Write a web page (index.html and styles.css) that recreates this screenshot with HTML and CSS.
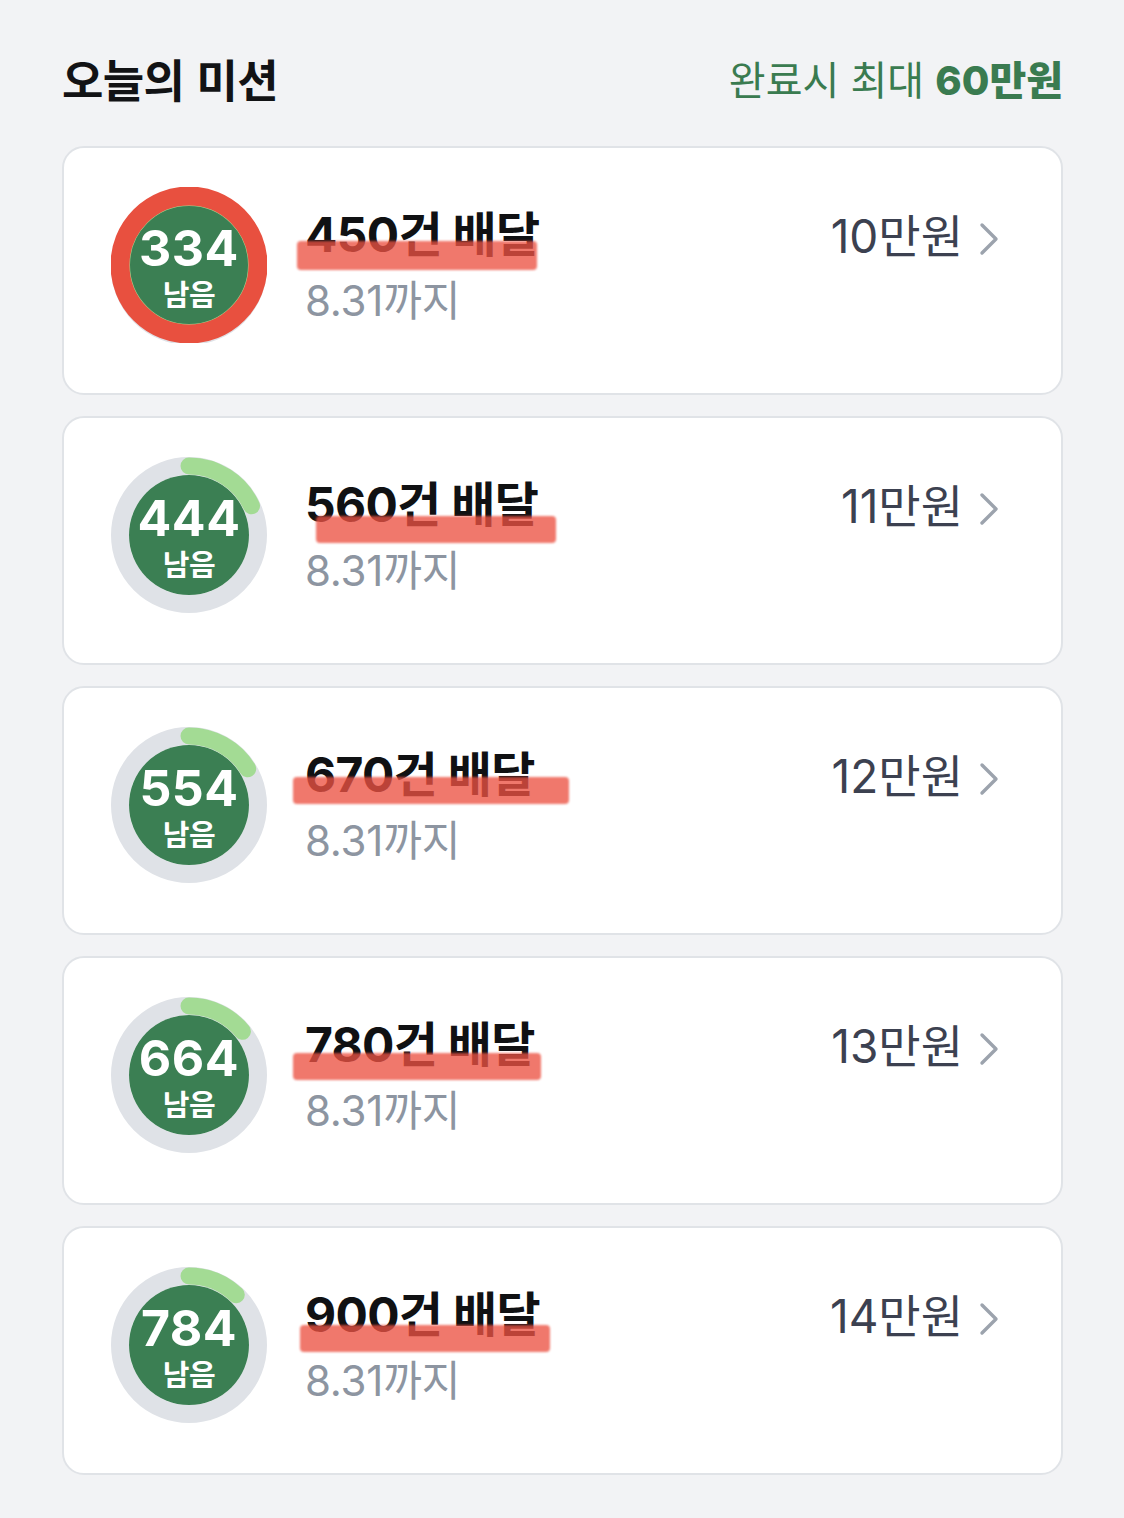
FILE: index.html
```html
<!DOCTYPE html>
<html lang="ko">
<head>
<meta charset="utf-8">
<link rel="stylesheet" href="styles.css">
</head>
<body>
<main class="page">
  <header class="head">
    <h1 class="head-title">오늘의 미션</h1>
    <div class="head-reward">완료시 최대 <b>60만원</b></div>
  </header>

  <section class="list">
    <article class="card">
      <div class="ring">
        <svg class="ring-svg" viewBox="0 0 156 156" width="156" height="156">
          <circle cx="78" cy="80" r="69" fill="none" stroke="#dfe2e7" stroke-width="18"/>
          <circle cx="78" cy="78" r="60" fill="#3b7f53"/>
          <circle cx="78" cy="78" r="60" fill="none" stroke="#a3db94" stroke-width="2"/>
          <circle cx="78" cy="78" r="69" fill="none" stroke="#e8503f" stroke-width="19"/>
        </svg>
        <div class="ring-label"><span class="ring-num">334</span><span class="ring-sub">남음</span></div>
      </div>
      <div class="info">
        <div class="title">450건 배달</div>
        <div class="date">8.31까지</div>
      </div>
      <div class="amount">10만원<svg class="chev" viewBox="0 0 24 36" width="24" height="36"><path d="M5 4 L19 18 L5 32" fill="none" stroke="#9ca3ad" stroke-width="3.4" stroke-linecap="round" stroke-linejoin="round"/></svg></div>
      <span class="mark mark-1"></span>
    </article>

    <article class="card">
      <div class="ring">
        <svg class="ring-svg" viewBox="0 0 156 156" width="156" height="156">
          <circle cx="78" cy="78" r="69" fill="none" stroke="#dfe2e7" stroke-width="18"/>
          <circle cx="78" cy="78" r="60" fill="#3b7f53"/>
          <circle cx="78" cy="78" r="69" fill="none" stroke="#a3db94" stroke-width="17" stroke-linecap="round" stroke-dasharray="78 400" transform="rotate(-90 78 78)"/>
        </svg>
        <div class="ring-label"><span class="ring-num">444</span><span class="ring-sub">남음</span></div>
      </div>
      <div class="info">
        <div class="title">560건 배달</div>
        <div class="date">8.31까지</div>
      </div>
      <div class="amount">11만원<svg class="chev" viewBox="0 0 24 36" width="24" height="36"><path d="M5 4 L19 18 L5 32" fill="none" stroke="#9ca3ad" stroke-width="3.4" stroke-linecap="round" stroke-linejoin="round"/></svg></div>
      <span class="mark mark-2"></span>
    </article>

    <article class="card">
      <div class="ring">
        <svg class="ring-svg" viewBox="0 0 156 156" width="156" height="156">
          <circle cx="78" cy="78" r="69" fill="none" stroke="#dfe2e7" stroke-width="18"/>
          <circle cx="78" cy="78" r="60" fill="#3b7f53"/>
          <circle cx="78" cy="78" r="69" fill="none" stroke="#a3db94" stroke-width="17" stroke-linecap="round" stroke-dasharray="70 400" transform="rotate(-90 78 78)"/>
        </svg>
        <div class="ring-label"><span class="ring-num">554</span><span class="ring-sub">남음</span></div>
      </div>
      <div class="info">
        <div class="title">670건 배달</div>
        <div class="date">8.31까지</div>
      </div>
      <div class="amount">12만원<svg class="chev" viewBox="0 0 24 36" width="24" height="36"><path d="M5 4 L19 18 L5 32" fill="none" stroke="#9ca3ad" stroke-width="3.4" stroke-linecap="round" stroke-linejoin="round"/></svg></div>
      <span class="mark mark-3"></span>
    </article>

    <article class="card">
      <div class="ring">
        <svg class="ring-svg" viewBox="0 0 156 156" width="156" height="156">
          <circle cx="78" cy="78" r="69" fill="none" stroke="#dfe2e7" stroke-width="18"/>
          <circle cx="78" cy="78" r="60" fill="#3b7f53"/>
          <circle cx="78" cy="78" r="69" fill="none" stroke="#a3db94" stroke-width="17" stroke-linecap="round" stroke-dasharray="61 400" transform="rotate(-90 78 78)"/>
        </svg>
        <div class="ring-label"><span class="ring-num">664</span><span class="ring-sub">남음</span></div>
      </div>
      <div class="info">
        <div class="title">780건 배달</div>
        <div class="date">8.31까지</div>
      </div>
      <div class="amount">13만원<svg class="chev" viewBox="0 0 24 36" width="24" height="36"><path d="M5 4 L19 18 L5 32" fill="none" stroke="#9ca3ad" stroke-width="3.4" stroke-linecap="round" stroke-linejoin="round"/></svg></div>
      <span class="mark mark-4"></span>
    </article>

    <article class="card">
      <div class="ring">
        <svg class="ring-svg" viewBox="0 0 156 156" width="156" height="156">
          <circle cx="78" cy="78" r="69" fill="none" stroke="#dfe2e7" stroke-width="18"/>
          <circle cx="78" cy="78" r="60" fill="#3b7f53"/>
          <circle cx="78" cy="78" r="69" fill="none" stroke="#a3db94" stroke-width="17" stroke-linecap="round" stroke-dasharray="52 400" transform="rotate(-90 78 78)"/>
        </svg>
        <div class="ring-label"><span class="ring-num">784</span><span class="ring-sub">남음</span></div>
      </div>
      <div class="info">
        <div class="title">900건 배달</div>
        <div class="date">8.31까지</div>
      </div>
      <div class="amount">14만원<svg class="chev" viewBox="0 0 24 36" width="24" height="36"><path d="M5 4 L19 18 L5 32" fill="none" stroke="#9ca3ad" stroke-width="3.4" stroke-linecap="round" stroke-linejoin="round"/></svg></div>
      <span class="mark mark-5"></span>
    </article>
  </section>
</main>
</body>
</html>
```

FILE: styles.css
```css
* { box-sizing: border-box; }

html, body {
  margin: 0;
  padding: 0;
  background: #f2f3f5;
}

body {
  font-family: Inter, "Noto Sans CJK KR", sans-serif;
  color: #111214;
}

.page {
  width: 1124px;
  min-height: 1518px;
  padding: 48px 61px 40px 62px;
}

.head {
  display: flex;
  align-items: center;
  justify-content: space-between;
  height: 62px;
  margin-bottom: 36px;
}

.head-title {
  margin: 0;
  font-family: "Noto Sans CJK KR", sans-serif;
  font-size: 45px;
  font-weight: 700;
  letter-spacing: -0.6px;
  line-height: 62px;
  color: #121315;
}

.head-reward {
  font-family: "Noto Sans CJK KR", sans-serif;
  font-size: 40px;
  font-weight: 400;
  letter-spacing: 0;
  line-height: 62px;
  color: #3a7b50;
}

.head-reward b {
  font-family: Inter, "Noto Sans CJK KR", sans-serif;
  font-weight: 800;
}

.list {
  display: flex;
  flex-direction: column;
  gap: 21px;
}

.card {
  position: relative;
  display: flex;
  align-items: flex-start;
  height: 249px;
  padding: 39px 60px 0 47px;
  background: #ffffff;
  border: 2px solid #e0e3e7;
  border-radius: 22px;
}

.ring {
  display: grid;
  flex: none;
  width: 156px;
  height: 156px;
}

.ring-svg,
.ring-label {
  grid-area: 1 / 1;
}

.ring-label {
  display: flex;
  flex-direction: column;
  align-items: center;
  justify-content: flex-start;
  padding-top: 39px;
  color: #ffffff;
}

.ring-num {
  font-family: Inter, sans-serif;
  font-size: 50px;
  font-weight: 700;
  line-height: 44px;
  letter-spacing: 0.5px;
}

.ring-sub {
  margin-top: 8px;
  font-family: "Noto Sans CJK KR", sans-serif;
  font-size: 29px;
  font-weight: 700;
  line-height: 30px;
  letter-spacing: -0.5px;
}

.info {
  margin-left: 38px;
  margin-top: 20px;
}

.title {
  font-size: 48px;
  font-weight: 700;
  line-height: 56px;
  letter-spacing: -0.7px;
  color: #101113;
}

.date {
  margin-top: 12px;
  font-size: 42px;
  font-weight: 400;
  line-height: 52px;
  letter-spacing: -0.2px;
  color: #8d95a1;
}

.amount {
  display: flex;
  align-items: center;
  gap: 14px;
  margin-left: auto;
  margin-top: 21px;
  font-size: 46px;
  font-weight: 400;
  line-height: 56px;
  letter-spacing: 0;
  color: #3c4150;
}

.chev {
  flex: none;
  margin-top: 6px;
}

.mark {
  position: absolute;
  height: 27px;
  background: rgba(236, 82, 66, 0.78);
  border-radius: 4px;
  filter: blur(1.2px);
  pointer-events: none;
}

.mark-1 { left: 233px; top: 93px; width: 240px; height: 29px; }
.mark-2 { left: 252px; top: 98px; width: 240px; }
.mark-3 { left: 229px; top: 89px; width: 276px; }
.mark-4 { left: 229px; top: 95px; width: 248px; }
.mark-5 { left: 236px; top: 97px; width: 250px; }
```
